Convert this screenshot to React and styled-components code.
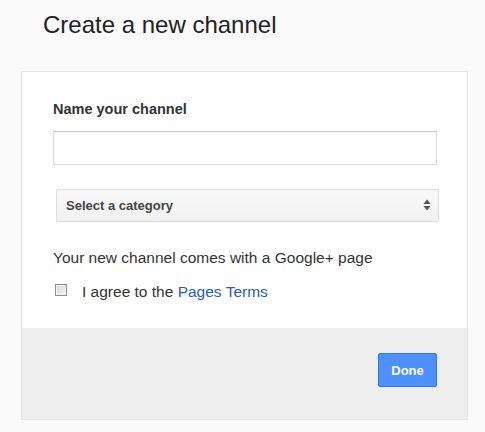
import React from 'react';
import styled, { createGlobalStyle } from 'styled-components';

const GlobalStyle = createGlobalStyle`
  body {
    margin: 0;
    background-color: #fafafa;
    font-family: "Liberation Sans", Arial, sans-serif;
    color: #333;
  }
`;

const Page = styled.div`
  height: 432px;
  padding: 0 17px 0 21px;
`;

const Title = styled.h1`
  margin: 11px 0 32px 22px;

  font-size: 24px;
  font-weight: normal;
  line-height: 28px;
  color: #222;
`;

const Card = styled.div`
  border: 1px solid #e5e5e5;
  background-color: white;
`;

const CardBody = styled.div`
  display: flex;
  flex-direction: column;
  padding: 29px 30px 27px 31px;
`;

const Label = styled.label`
  margin-bottom: 13px;

  font-size: 14.5px;
  font-weight: bold;
  line-height: 17px;
  color: #333;
`;

const TextInput = styled.input`
  box-sizing: border-box;
  width: 100%;
  height: 34px;
  margin: 0;
  padding: 0 8px;

  border: 1px solid #d9d9d9;
  border-top-color: #c0c0c0;
  border-radius: 1px;
  outline: none;
  font: 15px "Liberation Sans", Arial, sans-serif;
`;

const Select = styled.div`
  box-sizing: border-box;
  display: flex;
  align-items: center;
  justify-content: space-between;

  height: 33px;
  margin: 24px -2px 0 3px;
  padding: 0 7px 0 9px;

  border: 1px solid #dcdcdc;
  border-radius: 2px;
  background: linear-gradient(#f8f8f8, #f1f1f1);

  font-size: 13px;
  font-weight: bold;
  color: #444;
`;

const Text = styled.p`
  margin: ${(p) => p.$top}px 0 0;

  font-size: 15.5px;
  line-height: 18px;
  color: #333;
`;

const CheckRow = styled.label`
  display: flex;
  align-items: flex-start;
  gap: 15px;
  margin-top: 16px;

  font-size: 15.5px;
  line-height: 18px;
  color: #333;
`;

const Checkbox = styled.input`
  appearance: none;
  box-sizing: border-box;
  flex: none;
  width: 12px;
  height: 12px;
  margin: 1px 0 0 2px;

  border: 1px solid #8e8e8e;
  box-shadow: inset 0 0 0 1px #f4f4f4;
  background: linear-gradient(135deg, #d6d6d6, #f6f6f6);
`;

const Link = styled.a`
  color: #1f5ac7;
  text-decoration: none;
`;

const Footer = styled.div`
  display: flex;
  justify-content: flex-end;
  align-items: flex-start;

  height: 91px;
  box-sizing: border-box;
  padding: 25px 30px 0;

  background-color: #eeeeee;
`;

const DoneButton = styled.button`
  width: 59px;
  height: 34px;
  padding: 0;

  border: 1px solid #3079ed;
  border-radius: 2px;
  background-color: #4d90fe;

  font: bold 13px "Liberation Sans", Arial, sans-serif;
  color: white;
`;

function SortArrows() {
  return (
    <svg width="8" height="13" viewBox="0 0 8 13">
      <path d="M4 0.5 L7.5 5 L0.5 5 Z" fill="#555" />
      <path d="M0.5 7 L7.5 7 L4 11.5 Z" fill="#555" />
    </svg>
  );
}

function App() {
  return (
    <Page>
      <GlobalStyle />
      <Title>Create a new channel</Title>
      <Card>
        <CardBody>
          <Label htmlFor="channel-name">Name your channel</Label>
          <TextInput id="channel-name" type="text" />
          <Select>
            Select a category
            <SortArrows />
          </Select>
          <Text $top={27}>Your new channel comes with a Google+ page</Text>
          <CheckRow>
            <Checkbox type="checkbox" />
            <span>
              I agree to the <Link href="#">Pages Terms</Link>
            </span>
          </CheckRow>
        </CardBody>
        <Footer>
          <DoneButton>Done</DoneButton>
        </Footer>
      </Card>
    </Page>
  );
}

export default App;
